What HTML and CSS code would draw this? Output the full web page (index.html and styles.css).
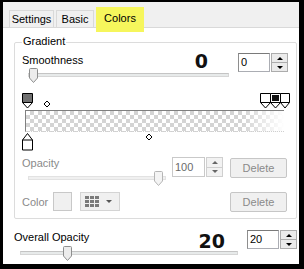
FILE: index.html
```html
<!DOCTYPE html>
<html>
<head>
<title>Gradient Colors</title>
<link rel="stylesheet" href="styles.css">
</head>
<body>

<div class="frame">
<div class="dialog">

<div class="tabs">
    <div class="tab tab-settings">Settings</div>
    <div class="tab tab-basic">Basic</div>
    <div class="tab tab-active">Colors</div>
</div>

<div class="page">

<div class="group">
    <div class="legend">Gradient</div>

    <div class="row row-smooth">
        <div class="slider-col col-smooth">
            <div class="slider-top pad-smooth"><span>Smoothness</span><b class="big">0</b></div>
            <div class="slider">
                <div class="track"></div>
                <svg class="thumb" style="left:1px" width="9" height="15" viewBox="0 0 9 15"><path d="M1.5 .5h6a1 1 0 0 1 1 1V10l-4 4.5L.5 10V1.5a1 1 0 0 1 1-1z" fill="#ececec" stroke="#8e8f8f"/></svg>
            </div>
        </div>
        <div class="spin">
            <div class="spin-field">0</div>
            <div class="spin-btns"><span class="up"></span><span class="down"></span></div>
        </div>
    </div>

    <div class="editor">
        <div class="grad-bar"></div>
        <svg class="stops" width="268" height="58" viewBox="0 0 268 58">
            <path d="M.5 .5h10v9L5.5 15 .5 9.5z" fill="#fff" stroke="#000"/>
            <rect x="1" y="1" width="9" height="8" fill="#707070"/>
            <path d="M.5 9.5h10" stroke="#000"/>
            <path d="M25 8l3 3-3 3-3-3z" fill="#fff" stroke="#000"/>

            <path d="M5.5 40.5l5 6.5v10H.5V47z" fill="#fff" stroke="#000"/>
            <path d="M.5 47h10" stroke="#000"/>
            <path d="M127 41l3 3-3 3-3-3z" fill="#fff" stroke="#000"/>

            <path d="M238.5 .5h10v9l-5 5.5-5-5.5z" fill="#fff" stroke="#000"/>
            <path d="M258.5 .5h9v9l-4.5 5.5-4.5-5.5z" fill="#fff" stroke="#000"/>
            <path d="M248.5 .5h10v9l-5 5.5-5-5.5z" fill="#fff" stroke="#000"/>
            <rect x="250" y="2" width="7" height="6" fill="#111"/>
            <path d="M238.5 9.5h29" stroke="#000"/>
        </svg>
    </div>

    <div class="row row-opacity disabled">
        <div class="slider-col col-opacity">
            <div class="slider-top"><span>Opacity</span></div>
            <div class="slider slider-low">
                <div class="track"></div>
                <svg class="thumb" style="left:126px" width="9" height="15" viewBox="0 0 9 15"><path d="M1.5 .5h6a1 1 0 0 1 1 1V10l-4 4.5L.5 10V1.5a1 1 0 0 1 1-1z" fill="#f4f4f4" stroke="#b5b5b5"/></svg>
            </div>
        </div>
        <div class="spin spin-opacity">
            <div class="spin-field">100</div>
            <div class="spin-btns"><span class="up"></span><span class="down"></span></div>
        </div>
        <div class="btn btn-top">Delete</div>
    </div>

    <div class="row row-color disabled">
        <div class="color-label">Color</div>
        <div class="swatch"></div>
        <div class="dropdown">
            <svg width="14" height="11" viewBox="0 0 14 11">
                <g fill="#7a7a7a">
                    <rect x="0" y="0" width="4" height="3"/><rect x="5" y="0" width="4" height="3"/><rect x="10" y="0" width="4" height="3"/>
                    <rect x="0" y="4" width="4" height="3"/><rect x="5" y="4" width="4" height="3"/><rect x="10" y="4" width="4" height="3"/>
                    <rect x="0" y="8" width="4" height="3"/><rect x="5" y="8" width="4" height="3"/><rect x="10" y="8" width="4" height="3"/>
                </g>
            </svg>
            <span class="caret"></span>
        </div>
        <div class="btn">Delete</div>
    </div>
</div>

<div class="row row-overall">
    <div class="slider-col col-overall">
        <div class="slider-top pad-overall"><span>Overall Opacity</span><b class="big big-low">20</b></div>
        <div class="slider slider-overall">
            <div class="track"></div>
            <svg class="thumb" style="left:43px" width="9" height="15" viewBox="0 0 9 15"><path d="M1.5 .5h6a1 1 0 0 1 1 1V10l-4 4.5L.5 10V1.5a1 1 0 0 1 1-1z" fill="#ececec" stroke="#8e8f8f"/></svg>
        </div>
    </div>
    <div class="spin">
        <div class="spin-field">20</div>
        <div class="spin-btns"><span class="up"></span><span class="down"></span></div>
    </div>
</div>

</div>
</div>
</div>

</body>
</html>
```

FILE: styles.css
```css
body {
    margin: 0;
    font-family: "Liberation Sans", Arial, sans-serif;
    font-size: 11px;
    color: #000;
}

.frame {
    width: 304px;
    height: 269px;
    box-sizing: border-box;
    background: #000;
    padding: 2px 5px 5px 3px;
}

.dialog {
    height: 262px;
    background: #fff;
    overflow: hidden;
}

/* tab strip */
.tabs {
    height: 25px;
    background: #f0f0f0;
    border-bottom: 1px solid #d9d9d9;
    display: flex;
    align-items: flex-end;
    padding-left: 6px;
}

.tab {
    box-sizing: border-box;
    height: 17px;
    border: 1px solid #d9d9d9;
    border-bottom: none;
    line-height: 16px;
    text-align: center;
    margin-right: 2px;
    background: #f0f0f0;
}

.tab-settings {
    width: 45px;
}

.tab-basic {
    width: 38px;
}

.tab-active {
    width: 48px;
    height: 25px;
    margin-bottom: -5px;
    padding-top: 2px;
    background: #f6f65c;
    border-color: #f6f65c;
    position: relative;
}

/* page body */
.page {
    padding: 0 2px 0 11px;
    display: flex;
    flex-direction: column;
}

.group {
    margin-top: 14px;
    border: 1px solid #dcdcdc;
    border-radius: 2px;
    padding-bottom: 6px;
    display: flex;
    flex-direction: column;
}

.legend {
    align-self: flex-start;
    margin: -9px 0 0 7px;
    padding: 0 1px;
    line-height: 14px;
    background: #fff;
}

.row {
    display: flex;
    align-items: flex-start;
}

.row-smooth {
    margin: 5px 0 0 7px;
}

.row-opacity {
    margin: 5px 9px 0 7px;
}

.row-color {
    margin: 6px 9px 0 7px;
}

.row-overall {
    margin-top: 11px;
}

.slider-col {
    display: flex;
    flex-direction: column;
}

.col-smooth {
    width: 207px;
}

.col-opacity {
    width: 144px;
}

.col-overall {
    width: 225px;
}

.slider-top {
    display: flex;
    justify-content: space-between;
    align-items: flex-start;
    line-height: 14px;
    height: 14px;
}

.pad-smooth {
    padding-right: 21px;
}

.pad-overall {
    padding-right: 13px;
}

.big {
    font-family: "DejaVu Sans", sans-serif;
    font-size: 19px;
    font-weight: bold;
    line-height: 14px;
    margin-top: 1px;
    color: #111;
}

.big-low {
    margin-top: 4px;
}

/* sliders */
.slider {
    position: relative;
    height: 15px;
    margin: 1px 0 0 6px;
}

.slider-low {
    margin-top: 1px;
}

.slider-overall {
    margin-top: 2px;
}

.track {
    box-sizing: border-box;
    margin-top: 5px;
    height: 4px;
    border: 1px solid #d6d6d6;
    border-top-color: #c4c4c4;
    background: #e7eaea;
}

.thumb {
    position: absolute;
    top: 0;
    display: block;
}

.disabled .track {
    border-color: #e2e2e2;
    background: #f0f0f0;
}

.disabled {
    color: #8a8a8a;
}

/* spin boxes */
.spin {
    display: flex;
    height: 19px;
    margin-left: 9px;
}

.spin-opacity {
    margin: 1px 0 0 6px;
    height: 20px;
}

.spin-field {
    box-sizing: border-box;
    width: 32px;
    border: 1px solid #abadb3;
    border-top-color: #7a7a7a;
    border-left-color: #8e8e8e;
    padding-left: 2px;
    line-height: 17px;
    background: #fff;
    color: #000;
}

.spin-opacity .spin-field {
    width: 33px;
    line-height: 18px;
    border-color: #c9c9c9;
    color: #6a6a6a;
}

.spin-btns {
    width: 17px;
    margin-left: 1px;
    display: flex;
    flex-direction: column;
}

.spin-btns span {
    flex: 1;
    border: 1px solid #acacac;
    background: #ebebeb;
    display: flex;
    align-items: center;
    justify-content: center;
}

.spin-btns span + span {
    border-top: none;
}

.spin-btns .up::after {
    content: "";
    border-left: 3px solid transparent;
    border-right: 3px solid transparent;
    border-bottom: 3px solid #000;
}

.spin-btns .down::after {
    content: "";
    border-left: 3px solid transparent;
    border-right: 3px solid transparent;
    border-top: 3px solid #000;
}

.spin-opacity .spin-btns span {
    border-color: #cfcfcf;
    background: #f2f2f2;
}

.spin-opacity .spin-btns span::after {
    border-top-color: #666;
    border-bottom-color: #666;
}

/* buttons */
.btn {
    box-sizing: border-box;
    margin-left: auto;
    width: 57px;
    height: 20px;
    border: 1px solid #c6c6c6;
    border-radius: 2px;
    background: #f0f0f0;
    color: #8a8a8a;
    text-align: center;
    line-height: 18px;
}

.btn-top {
    margin-top: 2px;
}

/* gradient editor */
.editor {
    position: relative;
    margin: 10px 0 0 7px;
    width: 268px;
    height: 58px;
}

.grad-bar {
    box-sizing: border-box;
    margin: 17px 0 0 3px;
    width: 259px;
    height: 22px;
    border-top: 1px solid #808080;
    border-left: 1px solid #808080;
    border-bottom: 1px dotted #d0d0d0;
    background:
        linear-gradient(to right, rgba(255,255,255,0) 84%, #fff 100%),
        repeating-conic-gradient(#d4d4d4 0 25%, #fff 0 50%) 0 0 / 8px 8px;
}

.stops {
    position: absolute;
    left: 0;
    top: 0;
}

/* color row */
.color-label {
    width: 31px;
    margin-top: 3px;
    line-height: 14px;
}

.swatch {
    box-sizing: border-box;
    width: 19px;
    height: 19px;
    border: 1px solid #c8c8c8;
    background: #f0f0f0;
}

.dropdown {
    box-sizing: border-box;
    width: 40px;
    height: 19px;
    margin-left: 8px;
    border: 1px solid #d4d4d4;
    background: #f0f0f0;
    display: flex;
    align-items: center;
    padding-left: 4px;
    gap: 7px;
}

.dropdown svg {
    display: block;
}

.caret {
    border-left: 3px solid transparent;
    border-right: 3px solid transparent;
    border-top: 3px solid #555;
}
```
